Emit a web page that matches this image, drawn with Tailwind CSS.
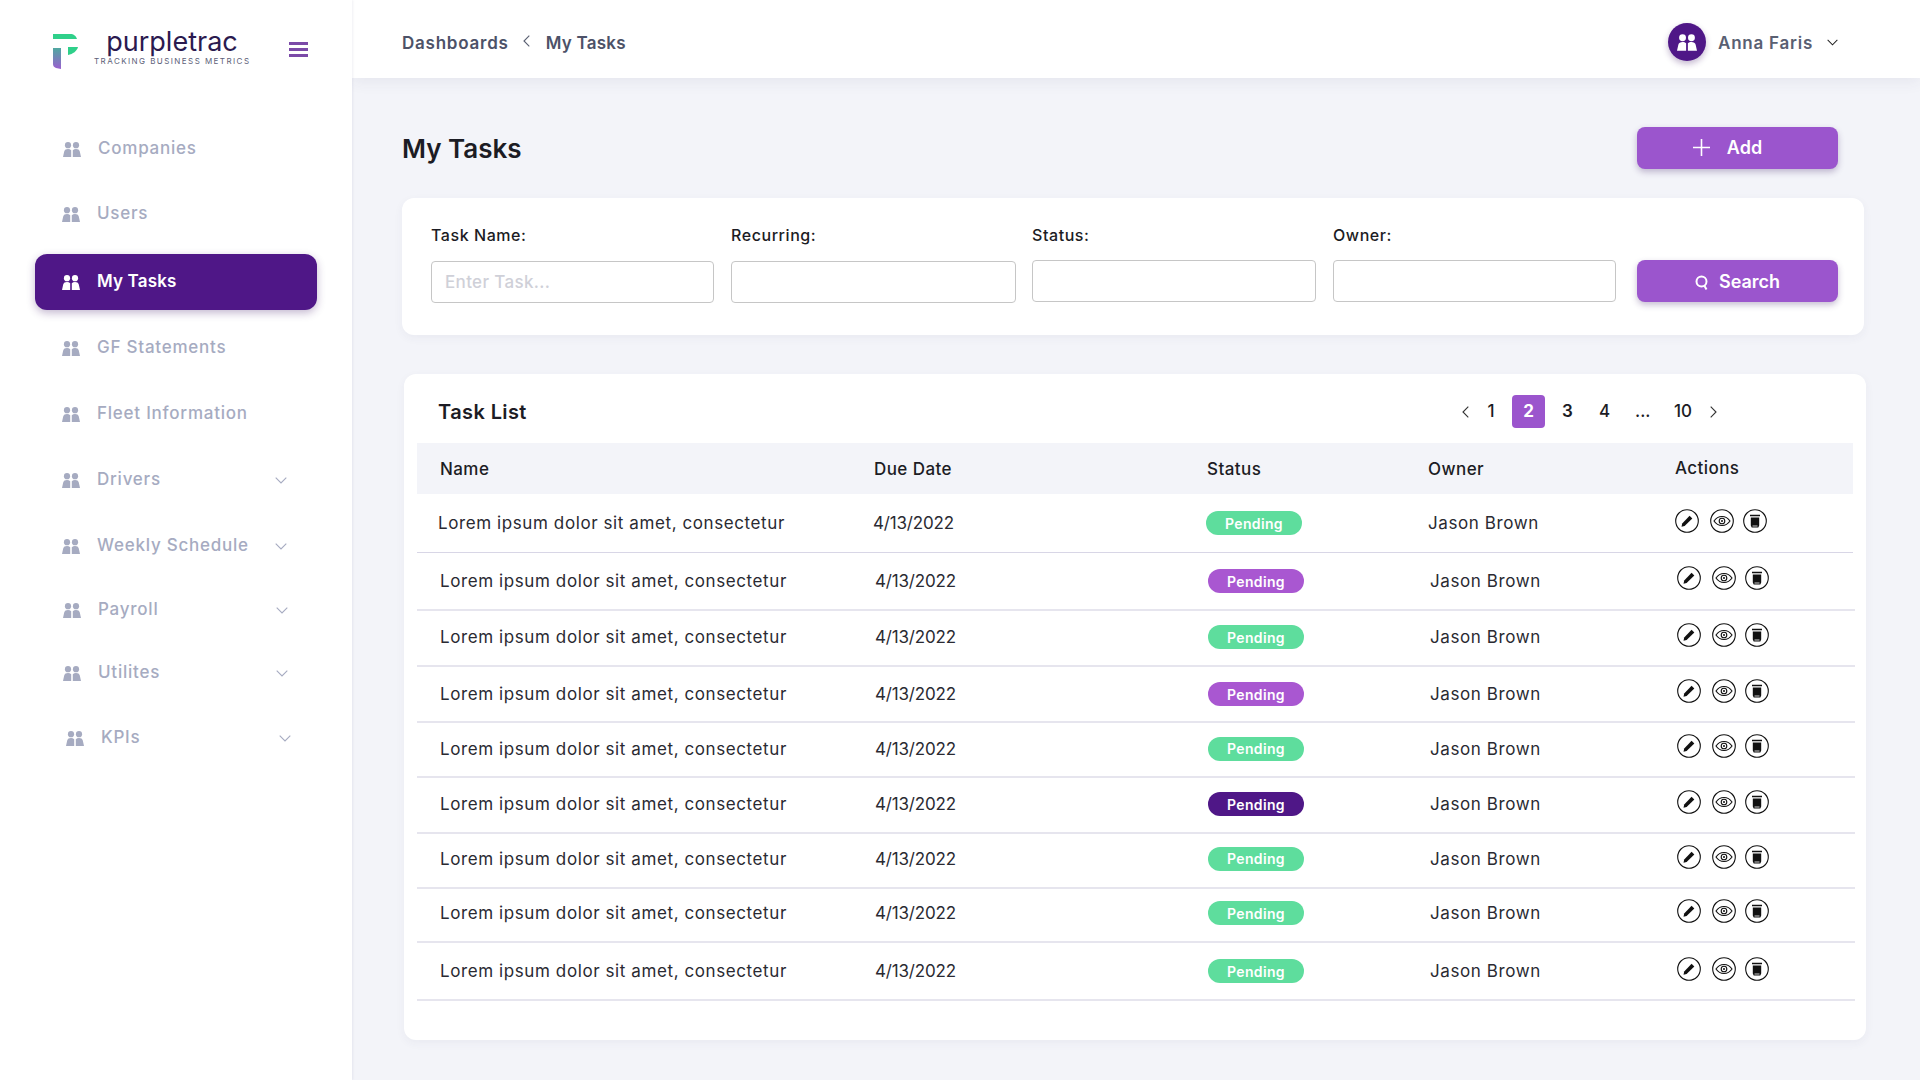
<!DOCTYPE html>
<html lang="en">
<head>
    <meta charset="UTF-8">
    <title>purpletrac - My Tasks</title>
    <script src="https://cdn.jsdelivr.net/npm/@tailwindcss/browser@4"></script>
</head>
<body class="bg-[#f3f4f9] font-['Inter',sans-serif] h-screen overflow-hidden">
    <!-- shared icons -->
    <svg class="hidden">
        <symbol id="people" viewBox="0 0 18 15">
            <circle cx="5" cy="3.2" r="3.1" fill="currentColor"/>
            <circle cx="13" cy="3.2" r="3.1" fill="currentColor"/>
            <path fill="currentColor" d="M0 15 1.2 9.6C1.6 7.8 3 7 5 7c1.300 0 2.400.4 3.200 1.200V15Z"/>
            <path fill="currentColor" d="M18 15 16.800 9.600C16.400 7.800 15 7 13 7c-1.300 0-2.400.4-3.200 1.200V15Z"/>
        </symbol>
        <symbol id="chev-down" viewBox="0 0 12 7">
            <path d="M.7.7 6 6 11.300.7" fill="none" stroke="currentColor" stroke-width="1.100"/>
        </symbol>
        <symbol id="act-edit" viewBox="0 0 24 24">
            <circle cx="12" cy="12" r="11.300" fill="none" stroke="#111" stroke-width="1.100"/>
            <path fill="#111" d="M14.600 6.700 17.300 9.400 9.600 17 6.500 17.800 7.200 14.400Z"/>
        </symbol>
        <symbol id="act-view" viewBox="0 0 24 24">
            <circle cx="12" cy="12" r="11.300" fill="none" stroke="#111" stroke-width="1.100"/>
            <path fill="none" stroke="#111" stroke-width="1.100" d="M4 12c2-3 4.800-4.500 8-4.500s6 1.500 8 4.500c-2 3-4.800 4.500-8 4.500S6 15 4 12Z"/>
            <circle cx="12" cy="12" r="2.800" fill="none" stroke="#111" stroke-width="1.100"/>
            <circle cx="12" cy="12" r="1" fill="#111"/>
        </symbol>
        <symbol id="act-trash" viewBox="0 0 24 24">
            <circle cx="12" cy="12" r="11.300" fill="none" stroke="#111" stroke-width="1.100"/>
            <path fill="#111" d="M7 5.800h10v1.500H7ZM7.800 8.400h8.400v8.200l-.9 1.900H8.700l-.9-1.900Z"/>
            <path fill="#fff" d="M9.500 16.600h5v.8h-5Z"/>
        </symbol>
    </svg>

    <div class="flex h-screen">
        <!-- Sidebar -->
        <aside class="w-[352px] shrink-0 bg-white z-20 shadow-[1px_0_2px_rgba(60,60,120,0.08)]">
            <div class="h-[78px] flex items-start pt-[28px] pl-[53px]">
                <svg class="w-[25px] h-[36px] mt-[6px]" viewBox="0 0 25 36">
                    <defs>
                        <linearGradient id="stemFill" x1="0" y1="0" x2="0" y2="1">
                            <stop offset="0" stop-color="#4fa8a0"/>
                            <stop offset="1" stop-color="#9b5fd0"/>
                        </linearGradient>
                    </defs>
                    <path fill="#2fd08a" d="M0 0h17c4 0 6 2 7 5H0Z"/>
                    <path fill="url(#stemFill)" d="M0 14h8v21L3 34c-2-1-3-2-3-4Z"/>
                    <path fill="#2fd08a" d="M15 13h10c-1 4-5 7-10 8Z"/>
                </svg>
                <div class="ml-[16px] w-[156px] text-center">
                    <div class="text-[27px] leading-[28px] font-normal text-[#2b1a4f]">purpletrac</div>
                    <div class="text-[8px] leading-[10px] text-[#5c6078] tracking-[0.18em] whitespace-nowrap">TRACKING BUSINESS METRICS</div>
                </div>
                <div class="ml-[39px] mt-[14px] w-[19px] flex flex-col gap-[3px]">
                    <div class="h-[3px] bg-[#7b4aa8]"></div>
                    <div class="h-[3px] bg-[#7b4aa8]"></div>
                    <div class="h-[3px] bg-[#7b4aa8]"></div>
                </div>
            </div>

            <nav class="pl-[35px] w-[317px] mt-[42px] text-[17px] font-medium tracking-[0.045em] text-[#a6abc1]">
                <div class="h-[56px] pt-[2px] flex items-center pl-[28px]"><svg class="w-[18px] h-[15px] mr-[17px]"><use href="#people"/></svg>Companies</div>
                <div class="h-[56px] pt-[2px] mt-[9px] flex items-center pl-[27px]"><svg class="w-[18px] h-[15px] mr-[17px]"><use href="#people"/></svg>Users</div>
                <div class="h-[56px] mt-[13px] flex items-center pl-[27px] rounded-xl bg-[#4f1787] text-white font-semibold tracking-[0.01em] shadow-[0_3px_8px_rgba(60,20,100,0.3)]"><svg class="w-[18px] h-[15px] mr-[17px]"><use href="#people"/></svg>My Tasks</div>
                <div class="h-[56px] pt-[2px] mt-[9px] flex items-center pl-[27px]"><svg class="w-[18px] h-[15px] mr-[17px]"><use href="#people"/></svg>GF Statements</div>
                <div class="h-[56px] pt-[2px] mt-[10px] flex items-center pl-[27px]"><svg class="w-[18px] h-[15px] mr-[17px]"><use href="#people"/></svg>Fleet Information</div>
                <div class="h-[56px] pt-[2px] mt-[10px] flex items-center pl-[27px] pr-[30px]"><svg class="w-[18px] h-[15px] mr-[17px]"><use href="#people"/></svg>Drivers<svg class="ml-auto w-[12px] h-[7px]"><use href="#chev-down"/></svg></div>
                <div class="h-[56px] pt-[2px] mt-[10px] flex items-center pl-[27px] pr-[30px]"><svg class="w-[18px] h-[15px] mr-[17px]"><use href="#people"/></svg>Weekly Schedule<svg class="ml-auto w-[12px] h-[7px]"><use href="#chev-down"/></svg></div>
                <div class="h-[56px] pt-[2px] mt-[8px] flex items-center pl-[28px] pr-[29px]"><svg class="w-[18px] h-[15px] mr-[17px]"><use href="#people"/></svg>Payroll<svg class="ml-auto w-[12px] h-[7px]"><use href="#chev-down"/></svg></div>
                <div class="h-[56px] pt-[2px] mt-[7px] flex items-center pl-[28px] pr-[29px]"><svg class="w-[18px] h-[15px] mr-[17px]"><use href="#people"/></svg>Utilites<svg class="ml-auto w-[12px] h-[7px]"><use href="#chev-down"/></svg></div>
                <div class="h-[56px] pt-[2px] mt-[9px] flex items-center pl-[31px] pr-[26px]"><svg class="w-[18px] h-[15px] mr-[17px]"><use href="#people"/></svg>KPIs<svg class="ml-auto w-[12px] h-[7px]"><use href="#chev-down"/></svg></div>
            </nav>
        </aside>

        <div class="flex-1 min-w-0">
            <!-- Top bar -->
            <header class="h-[78px] bg-white flex items-center pt-[10px] pl-[50px] pr-[82px] shadow-[0_4px_14px_rgba(60,60,100,0.07)] relative z-10">
                <span class="text-[17px] font-semibold text-[#4d5268] tracking-[0.045em]">Dashboards</span>
                <svg class="w-[7px] h-[12px] ml-[14px] mb-[6px] text-[#5a6072]" viewBox="0 0 7 12"><path d="M6.300.7 1 6l5.300 5.300" fill="none" stroke="currentColor" stroke-width="1.100"/></svg>
                <span class="ml-[16px] text-[17px] font-semibold text-[#4d5268] tracking-[0.015em]">My Tasks</span>
                <div class="ml-auto mb-[4px] w-[38px] h-[38px] rounded-full bg-[#4f1787] text-white flex items-center justify-center shadow-[0_3px_6px_rgba(60,20,100,0.3)]"><svg class="w-[20px] h-[17px]"><use href="#people"/></svg></div>
                <span class="ml-[12px] text-[17px] font-semibold text-[#5a6072] tracking-[0.045em]">Anna Faris</span>
                <svg class="ml-[14px] mb-[3px] w-[11px] h-[7px] text-[#222]"><use href="#chev-down"/></svg>
            </header>

            <main class="pl-[50px]">
                <div class="h-[92px] w-[1436px] flex items-center justify-between pt-[49px]">
                    <h1 class="text-[26px] leading-[30px] font-semibold text-[#1c1c24]">My Tasks</h1>
                    <button class="w-[201px] h-[42px] mb-[2px] pr-[20px] rounded-lg bg-[#9b55cd] text-white text-[18px] font-semibold flex items-center justify-center shadow-[0_3px_6px_rgba(70,40,110,0.3)]">
                        <svg class="w-[17px] h-[17px] mr-[17px]" viewBox="0 0 17 17"><path d="M8.500 0v17M0 8.500h17" stroke="currentColor" stroke-width="1.600"/></svg>Add
                    </button>
                </div>

                <!-- Filters -->
                <section class="mt-[28px] w-[1462px] h-[137px] bg-white rounded-xl shadow-[0_3px_10px_rgba(60,60,100,0.05)] flex items-start pl-[29px] pt-[27px]">
                    <label class="w-[283px] block">
                        <span class="block text-[16px] leading-[20px] font-medium text-[#1c1c24] tracking-[0.035em]">Task Name:</span>
                        <input class="mt-[16px] block w-full h-[42px] rounded border border-[#c6c6c6] px-[13px] text-[17px] font-medium tracking-[0.02em] placeholder:text-[#cfd0d8]" placeholder="Enter Task...">
                    </label>
                    <label class="w-[285px] ml-[17px] block">
                        <span class="block text-[16px] leading-[20px] font-medium text-[#1c1c24] tracking-[0.035em]">Recurring:</span>
                        <input class="mt-[16px] block w-full h-[42px] rounded border border-[#c6c6c6]">
                    </label>
                    <label class="w-[284px] ml-[16px] block">
                        <span class="block text-[16px] leading-[20px] font-medium text-[#1c1c24] tracking-[0.035em]">Status:</span>
                        <input class="mt-[15px] block w-full h-[42px] rounded border border-[#c6c6c6]">
                    </label>
                    <label class="w-[283px] ml-[17px] block">
                        <span class="block text-[16px] leading-[20px] font-medium text-[#1c1c24] tracking-[0.035em]">Owner:</span>
                        <input class="mt-[15px] block w-full h-[42px] rounded border border-[#c6c6c6]">
                    </label>
                    <button class="ml-[21px] mt-[35px] w-[201px] h-[42px] rounded-lg bg-[#9b55cd] text-white text-[18px] font-semibold flex items-center justify-center shadow-[0_3px_6px_rgba(70,40,110,0.3)]">
                        <svg class="w-[14px] h-[15px] mr-[10px] mt-[2px]" viewBox="0 0 14 15"><circle cx="6.500" cy="6.500" r="5" fill="none" stroke="currentColor" stroke-width="2"/><path d="m9.500 11 2 3.500" stroke="currentColor" stroke-width="2"/></svg>Search
                    </button>
                </section>

                <!-- Task list -->
                <section class="mt-[39px] ml-[2px] w-[1462px] h-[666px] bg-white rounded-xl shadow-[0_3px_10px_rgba(60,60,100,0.05)] pl-[13px] pt-[8px] text-[#1c1c24]">
                    <div class="h-[61px] pb-[2px] flex items-center pl-[21px] w-[1436px]">
                        <h2 class="text-[20px] font-semibold tracking-[0.02em]">Task List</h2>
                        <div class="ml-auto flex items-center text-[17px] font-medium w-[262px] mr-[129px]">
                            <svg class="w-[7px] h-[12px] text-[#333]" viewBox="0 0 7 12"><path d="M6.300.7 1 6l5.300 5.300" fill="none" stroke="currentColor" stroke-width="1.100"/></svg>
                            <span class="ml-[18px] w-[8px] text-center">1</span>
                            <span class="ml-[17px] w-[33px] h-[33px] rounded bg-[#9b55cd] text-white font-bold flex items-center justify-center">2</span>
                            <span class="ml-[17px] w-[10px] text-center font-semibold">3</span>
                            <span class="ml-[27px] w-[10px] text-center">4</span>
                            <span class="ml-[26px] w-[12px] text-center">...</span>
                            <span class="ml-[26px] w-[20px] text-center">10</span>
                            <svg class="ml-[17px] w-[7px] h-[12px] text-[#333]" viewBox="0 0 7 12"><path d="M.7.7 6 6 .7 11.300" fill="none" stroke="currentColor" stroke-width="1.100"/></svg>
                        </div>
                    </div>

                    <div class="w-[1438px] text-[17px] tracking-[0.035em] text-[#2a2a32]">
                        <div class="h-[51px] w-[1436px] bg-[#f3f4f9] font-medium text-[#1c1c24]">
                            <div class="h-full ml-[-2px] grid grid-cols-[458px_333px_222px_246px_177px] items-center tracking-[0.025em]">
                                <div class="pl-[25px] pt-[2px]">Name</div><div class="pl-[1px] pt-[2px]">Due Date</div><div class="pl-[1px] pt-[2px]">Status</div><div class="pt-[2px]">Owner</div><div class="pl-[1px]">Actions</div>
                            </div>
                        </div>

                        <div class="h-[59px] w-[1436px] border-b border-[#d8d6e6]">
                            <div class="h-full pt-[2px] ml-[-2px] grid grid-cols-[458px_333px_222px_246px_177px] items-center">
                                <div class="pl-[23px]">Lorem ipsum dolor sit amet, consectetur</div><div class="tracking-[-0.01em]">4/13/2022</div>
                                <div class="flex mb-[2px]"><span class="inline-flex w-[96px] h-[24px] items-center justify-center rounded-full bg-[#5edd9d] text-white text-[14px] font-semibold tracking-[0.025em]">Pending</span></div>
                                <div>Jason Brown</div>
                                <div class="flex pl-[1px] mb-[6px]"><svg class="w-[24px] h-[24px]"><use href="#act-edit"/></svg><svg class="ml-[11px] w-[24px] h-[24px]"><use href="#act-view"/></svg><svg class="ml-[9px] w-[24px] h-[24px]"><use href="#act-trash"/></svg></div>
                            </div>
                        </div>
                        <div class="h-[58px] pt-[2px] border-b-2 border-[#e6e5ee] grid grid-cols-[458px_333px_222px_246px_177px] items-center">
                            <div class="pl-[23px]">Lorem ipsum dolor sit amet, consectetur</div><div class="tracking-[-0.01em]">4/13/2022</div>
                            <div class="flex mb-[2px]"><span class="inline-flex w-[96px] h-[24px] items-center justify-center rounded-full bg-[#a957d1] text-white text-[14px] font-semibold tracking-[0.025em]">Pending</span></div>
                            <div>Jason Brown</div>
                            <div class="flex pl-[1px] mb-[8px]"><svg class="w-[24px] h-[24px]"><use href="#act-edit"/></svg><svg class="ml-[11px] w-[24px] h-[24px]"><use href="#act-view"/></svg><svg class="ml-[9px] w-[24px] h-[24px]"><use href="#act-trash"/></svg></div>
                        </div>
                        <div class="h-[56px] border-b-2 border-[#e6e5ee] grid grid-cols-[458px_333px_222px_246px_177px] items-center">
                            <div class="pl-[23px]">Lorem ipsum dolor sit amet, consectetur</div><div class="tracking-[-0.01em]">4/13/2022</div>
                            <div class="flex mb-[2px]"><span class="inline-flex w-[96px] h-[24px] items-center justify-center rounded-full bg-[#5edd9d] text-white text-[14px] font-semibold tracking-[0.025em]">Pending</span></div>
                            <div>Jason Brown</div>
                            <div class="flex pl-[1px] mb-[6px]"><svg class="w-[24px] h-[24px]"><use href="#act-edit"/></svg><svg class="ml-[11px] w-[24px] h-[24px]"><use href="#act-view"/></svg><svg class="ml-[9px] w-[24px] h-[24px]"><use href="#act-trash"/></svg></div>
                        </div>
                        <div class="h-[56px] pt-[2px] border-b-2 border-[#e6e5ee] grid grid-cols-[458px_333px_222px_246px_177px] items-center">
                            <div class="pl-[23px]">Lorem ipsum dolor sit amet, consectetur</div><div class="tracking-[-0.01em]">4/13/2022</div>
                            <div class="flex mb-[2px]"><span class="inline-flex w-[96px] h-[24px] items-center justify-center rounded-full bg-[#a957d1] text-white text-[14px] font-semibold tracking-[0.025em]">Pending</span></div>
                            <div>Jason Brown</div>
                            <div class="flex pl-[1px] mb-[8px]"><svg class="w-[24px] h-[24px]"><use href="#act-edit"/></svg><svg class="ml-[11px] w-[24px] h-[24px]"><use href="#act-view"/></svg><svg class="ml-[9px] w-[24px] h-[24px]"><use href="#act-trash"/></svg></div>
                        </div>
                        <div class="h-[55px] border-b-2 border-[#e6e5ee] grid grid-cols-[458px_333px_222px_246px_177px] items-center">
                            <div class="pl-[23px]">Lorem ipsum dolor sit amet, consectetur</div><div class="tracking-[-0.01em]">4/13/2022</div>
                            <div class="flex mb-[2px]"><span class="inline-flex w-[96px] h-[24px] items-center justify-center rounded-full bg-[#5edd9d] text-white text-[14px] font-semibold tracking-[0.025em]">Pending</span></div>
                            <div>Jason Brown</div>
                            <div class="flex pl-[1px] mb-[8px]"><svg class="w-[24px] h-[24px]"><use href="#act-edit"/></svg><svg class="ml-[11px] w-[24px] h-[24px]"><use href="#act-view"/></svg><svg class="ml-[9px] w-[24px] h-[24px]"><use href="#act-trash"/></svg></div>
                        </div>
                        <div class="h-[56px] border-b-2 border-[#e6e5ee] grid grid-cols-[458px_333px_222px_246px_177px] items-center">
                            <div class="pl-[23px]">Lorem ipsum dolor sit amet, consectetur</div><div class="tracking-[-0.01em]">4/13/2022</div>
                            <div class="flex mb-[2px]"><span class="inline-flex w-[96px] h-[24px] items-center justify-center rounded-full bg-[#4f1787] text-white text-[14px] font-semibold tracking-[0.025em]">Pending</span></div>
                            <div>Jason Brown</div>
                            <div class="flex pl-[1px] mb-[6px]"><svg class="w-[24px] h-[24px]"><use href="#act-edit"/></svg><svg class="ml-[11px] w-[24px] h-[24px]"><use href="#act-view"/></svg><svg class="ml-[9px] w-[24px] h-[24px]"><use href="#act-trash"/></svg></div>
                        </div>
                        <div class="h-[55px] pb-[2px] border-b-2 border-[#e6e5ee] grid grid-cols-[458px_333px_222px_246px_177px] items-center">
                            <div class="pl-[23px]">Lorem ipsum dolor sit amet, consectetur</div><div class="tracking-[-0.01em]">4/13/2022</div>
                            <div class="flex mb-[2px]"><span class="inline-flex w-[96px] h-[24px] items-center justify-center rounded-full bg-[#5edd9d] text-white text-[14px] font-semibold tracking-[0.025em]">Pending</span></div>
                            <div>Jason Brown</div>
                            <div class="flex pl-[1px] mb-[6px]"><svg class="w-[24px] h-[24px]"><use href="#act-edit"/></svg><svg class="ml-[11px] w-[24px] h-[24px]"><use href="#act-view"/></svg><svg class="ml-[9px] w-[24px] h-[24px]"><use href="#act-trash"/></svg></div>
                        </div>
                        <div class="h-[54px] pb-[2px] border-b-2 border-[#e6e5ee] grid grid-cols-[458px_333px_222px_246px_177px] items-center">
                            <div class="pl-[23px]">Lorem ipsum dolor sit amet, consectetur</div><div class="tracking-[-0.01em]">4/13/2022</div>
                            <div class="flex mb-[2px]"><span class="inline-flex w-[96px] h-[24px] items-center justify-center rounded-full bg-[#5edd9d] text-white text-[14px] font-semibold tracking-[0.025em]">Pending</span></div>
                            <div>Jason Brown</div>
                            <div class="flex pl-[1px] mb-[6px]"><svg class="w-[24px] h-[24px]"><use href="#act-edit"/></svg><svg class="ml-[11px] w-[24px] h-[24px]"><use href="#act-view"/></svg><svg class="ml-[9px] w-[24px] h-[24px]"><use href="#act-trash"/></svg></div>
                        </div>
                        <div class="h-[58px] pt-[2px] border-b-2 border-[#e6e5ee] grid grid-cols-[458px_333px_222px_246px_177px] items-center">
                            <div class="pl-[23px]">Lorem ipsum dolor sit amet, consectetur</div><div class="tracking-[-0.01em]">4/13/2022</div>
                            <div class="flex mb-[2px]"><span class="inline-flex w-[96px] h-[24px] items-center justify-center rounded-full bg-[#5edd9d] text-white text-[14px] font-semibold tracking-[0.025em]">Pending</span></div>
                            <div>Jason Brown</div>
                            <div class="flex pl-[1px] mb-[6px]"><svg class="w-[24px] h-[24px]"><use href="#act-edit"/></svg><svg class="ml-[11px] w-[24px] h-[24px]"><use href="#act-view"/></svg><svg class="ml-[9px] w-[24px] h-[24px]"><use href="#act-trash"/></svg></div>
                        </div>
                    </div>
                </section>
            </main>
        </div>
    </div>
</body>
</html>
